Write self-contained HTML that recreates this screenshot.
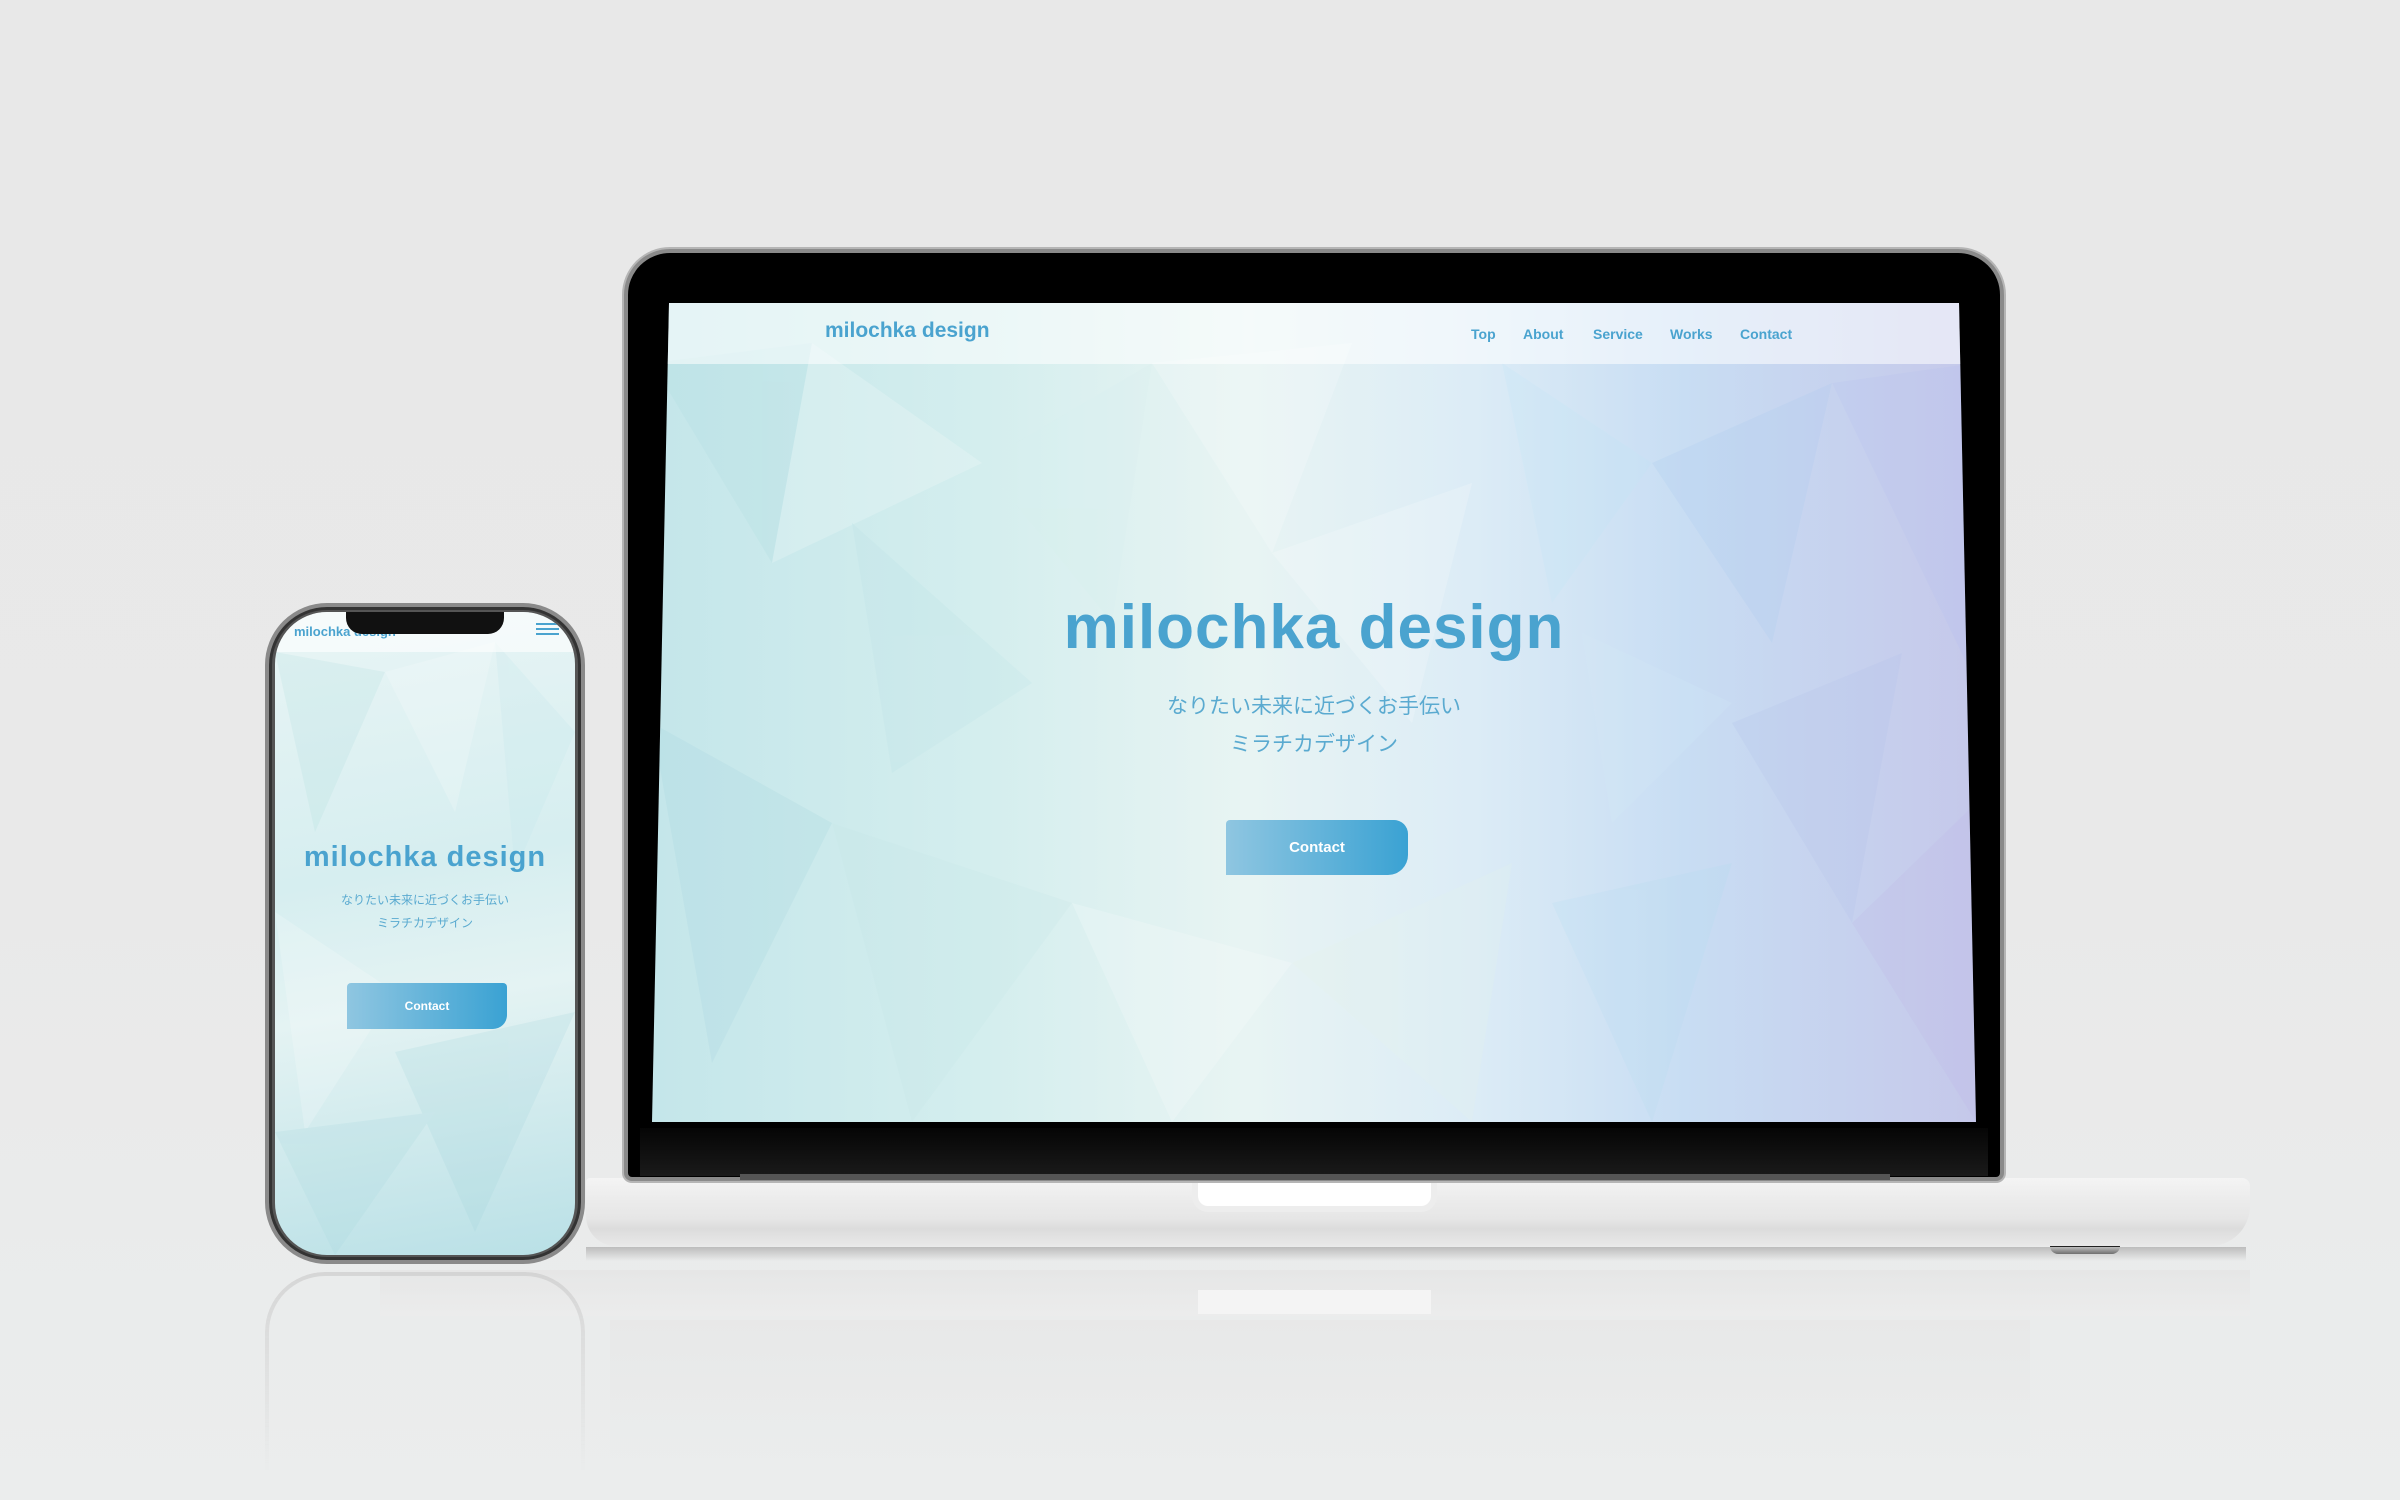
<!DOCTYPE html>
<html><head><meta charset="utf-8">
<style>
*{margin:0;padding:0;box-sizing:border-box}
body{width:2400px;height:1500px;overflow:hidden;position:relative;background:linear-gradient(#e8e8e8 0%,#e9e9e9 60%,#ebeded 100%);font-family:"Liberation Sans","Noto Sans CJK JP",sans-serif}
.abs{position:absolute}
.lid{left:624px;top:249px;width:1380px;height:932px;background:#000;border-radius:46px 46px 8px 8px;border:4px solid #8a8a8a;box-shadow:0 0 0 2px #b5b5b5}
.chin{left:640px;top:1128px;width:1348px;height:48px;background:linear-gradient(#050505,#1a1a1a)}
.screen{left:652px;top:303px;width:1324px;height:819px;clip-path:polygon(17px 0,1307px 0,100% 100%,0 100%);overflow:hidden;
background:linear-gradient(90deg,#c4e6ea 0%,#d4eeee 25%,#e8f4f3 45%,#dcecf6 62%,#c8ddf3 78%,#c5c8ea 100%)}
.blue{color:#4aa3cf}
.base{left:586px;top:1178px;width:1664px;height:68px;background:linear-gradient(#f4f4f4 0%,#ececec 30%,#e6e6e6 60%,#dcdcdc 75%,#e9e9e9 100%);border-radius:4px 8px 40px 30px}
.notch{left:1198px;top:1180px;width:233px;height:26px;background:#fff;border-radius:0 0 10px 10px;box-shadow:0 0 0 6px #ededed}
.phone{left:265px;top:603px;width:320px;height:661px;border-radius:62px;background:#555;border:4px solid #8a8a8a;box-shadow:inset 0 0 0 3px #333}
.pscreen{left:275px;top:612px;width:300px;height:643px;border-radius:52px;overflow:hidden;background:linear-gradient(170deg,#e9f5f5 0%,#d6eef0 40%,#e4f3f3 60%,#b9e0e6 100%)}
</style></head><body>
<div class="abs" style="left:380px;top:1270px;width:1870px;height:46px;background:linear-gradient(#e4e4e4,#ececec);opacity:.7"></div>
<div class="abs" style="left:1198px;top:1290px;width:233px;height:24px;background:#f4f4f4"></div>
<div class="abs" style="left:610px;top:1320px;width:1420px;height:140px;background:linear-gradient(#e6e6e6,rgba(233,235,235,0));opacity:.6"></div>
<div class="abs" style="left:265px;top:1272px;width:320px;height:200px;border-radius:60px 60px 0 0;border:4px solid #c8c8c8;border-bottom:none;opacity:.6;-webkit-mask:linear-gradient(#000,transparent)"></div>

<div class="abs base"></div>
<div class="abs" style="left:2050px;top:1246px;width:70px;height:8px;background:#222;border-radius:0 0 20px 20px"></div>
<div class="abs" style="left:586px;top:1247px;width:1660px;height:14px;background:linear-gradient(#bdbdbd,rgba(220,220,220,0))"></div>
<div class="abs notch"></div>
<div class="abs lid"></div>
<div class="abs chin"></div>
<div class="abs" style="left:740px;top:1174px;width:1150px;height:6px;background:#555"></div>

<div class="abs screen">
<svg class="abs" style="left:0;top:0" width="1324" height="819">
<g opacity=".2">
<polygon points="0,60 160,40 120,260" fill="#a9dade"/>
<polygon points="160,40 330,160 120,260" fill="#fff"/>
<polygon points="330,160 500,60 460,320" fill="#d7f0ee"/>
<polygon points="500,60 700,40 620,250" fill="#fff"/>
<polygon points="620,250 820,180 760,420" fill="#fff"/>
<polygon points="850,60 1000,160 900,300" fill="#bfe6f8"/>
<polygon points="1000,160 1180,80 1120,340" fill="#a7c9ef"/>
<polygon points="1180,80 1324,60 1324,380" fill="#b5bfee"/>
<polygon points="1080,420 1250,350 1200,620" fill="#b0c0ea"/>
<polygon points="1200,620 1324,500 1324,819" fill="#bdb4e6"/>
<polygon points="0,420 180,520 60,760" fill="#9fd3da"/>
<polygon points="180,520 420,600 260,819" fill="#c4e6e6"/>
<polygon points="420,600 640,660 520,819" fill="#fff"/>
<polygon points="640,660 860,560 820,819" fill="#e6f4ea"/>
<polygon points="900,600 1080,560 1000,819" fill="#b3dcef"/>
<polygon points="200,220 380,380 240,470" fill="#b7e1e4"/>
<polygon points="930,330 1080,400 960,520" fill="#d6ecf8"/>
</g>
<polygon points="0,0 1324,0 1324,61 0,61" fill="rgba(255,255,255,.55)"/>
</svg>
<div class="abs blue" style="left:173px;top:16px;font-size:21px;font-weight:bold">milochka design</div>
<div class="abs blue" style="left:819px;top:23px;font-size:14px;font-weight:bold">
<span style="position:absolute;left:0">Top</span><span style="position:absolute;left:52px">About</span><span style="position:absolute;left:122px">Service</span><span style="position:absolute;left:199px">Works</span><span style="position:absolute;left:269px">Contact</span></div>
<div class="abs blue" style="left:0;width:1324px;text-align:center;top:289px;font-size:62px;font-weight:bold;letter-spacing:1px">milochka design</div>
<div class="abs" style="left:0;width:1324px;text-align:center;top:385px;font-size:21px;line-height:38px;color:#5aaad0">なりたい未来に近づくお手伝い<br>ミラチカデザイン</div>
<div class="abs" style="left:574px;top:517px;width:182px;height:55px;border-radius:4px 14px 20px 0;background:linear-gradient(90deg,#8fc6e1,#3aa2d3);color:#fff;font-size:15px;font-weight:bold;text-align:center;line-height:55px">Contact</div>
</div>

<div class="abs phone"></div>
<div class="abs pscreen">
<svg class="abs" style="left:0;top:0" width="300" height="643">
<g opacity=".2">
<polygon points="0,40 110,60 40,220" fill="#a9dade"/>
<polygon points="110,60 220,30 180,200" fill="#fff"/>
<polygon points="220,30 300,120 240,260" fill="#bfe4ea"/>
<polygon points="0,300 120,380 30,520" fill="#fff"/>
<polygon points="120,440 300,400 200,620" fill="#9fd3da"/>
<polygon points="0,520 160,500 60,643" fill="#a5d7dd"/>
</g>
<rect width="300" height="40" fill="rgba(255,255,255,.6)"/>
</svg>
<div class="abs blue" style="left:19px;top:12px;font-size:13px;font-weight:bold">milochka design</div>
<div class="abs" style="left:71px;top:0;width:158px;height:22px;background:#111;border-radius:0 0 16px 16px"></div>
<div class="abs" style="left:261px;top:11px;width:23px;height:2px;background:#4aa3cf;box-shadow:0 5px 0 #4aa3cf,0 10px 0 #4aa3cf"></div>
<div class="abs blue" style="left:0;width:300px;text-align:center;top:229px;font-size:29px;font-weight:bold;letter-spacing:1px">milochka design</div>
<div class="abs" style="left:0;width:300px;text-align:center;top:277px;font-size:12px;line-height:23px;color:#5aaad0">なりたい未来に近づくお手伝い<br>ミラチカデザイン</div>
<div class="abs" style="left:72px;top:371px;width:160px;height:46px;border-radius:4px 4px 14px 0;background:linear-gradient(90deg,#8fc6e1,#3aa2d3);color:#fff;font-size:12px;font-weight:bold;text-align:center;line-height:46px">Contact</div>
</div>
</body></html>
